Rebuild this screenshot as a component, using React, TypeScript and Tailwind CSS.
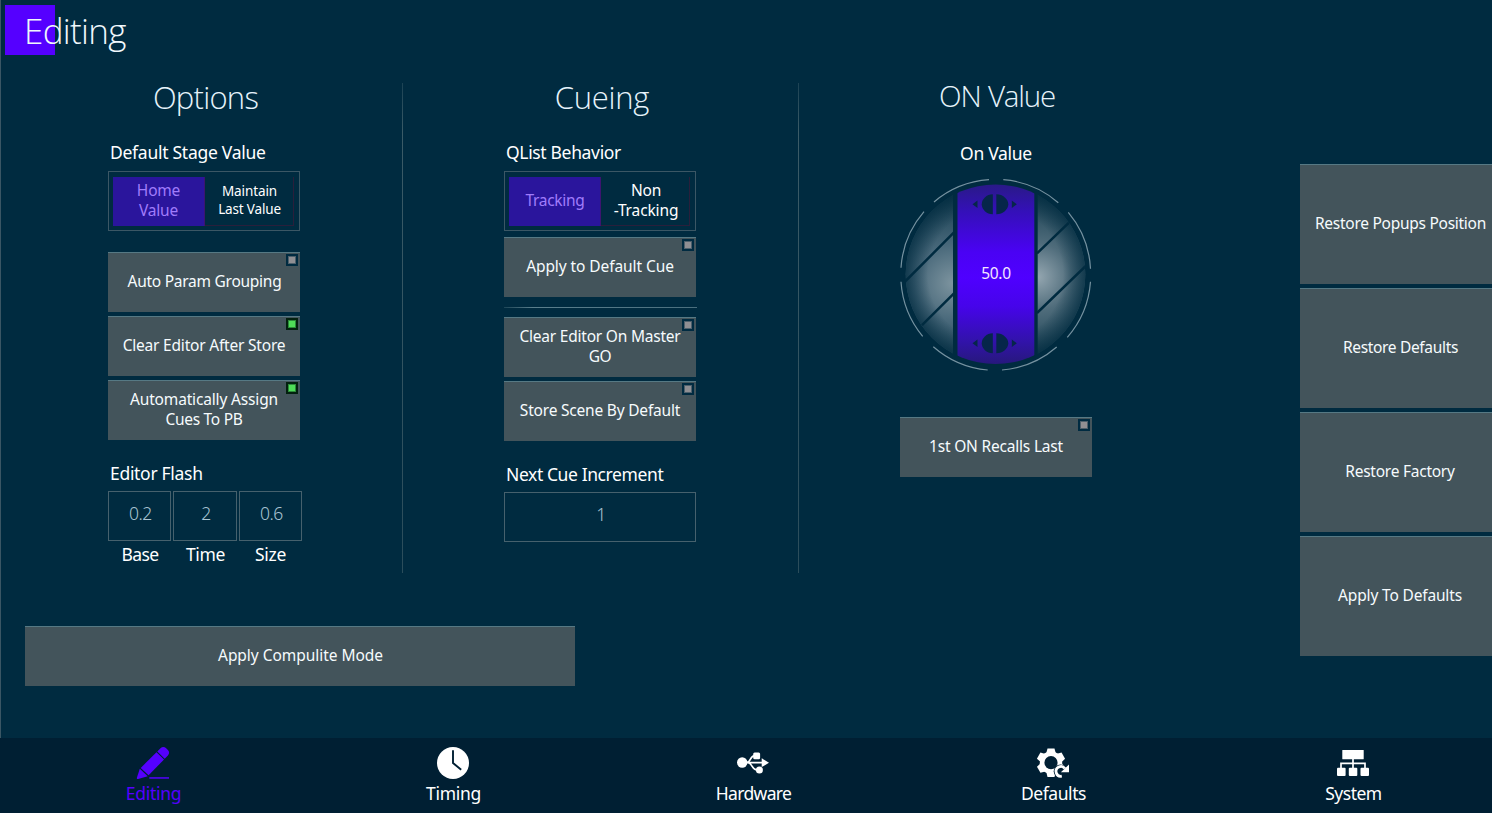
import React from "react";
import clsx from "clsx";

function Led({ on = false }: { on?: boolean }) {
  return (
    <span
      className={clsx(
        "absolute top-[1px] right-[2px] size-3 pt-[2px] pl-[2px]",
        on ? "bg-[#03210f]" : "bg-[#002b41]"
      )}
    >
      <span className={clsx("block size-2 border", on ? "border-[#2b8a38] bg-[#4fdc58]" : "border-[#4d606c] bg-[#8f8f93]")} />
    </span>
  );
}

type PanelButtonProps = {
  children: React.ReactNode;
  className?: string;
  led?: "on" | "off";
};

function PanelButton({ children, className = "h-[60px] w-full", led }: PanelButtonProps) {
  return (
    <button
      className={clsx(
        "relative flex shrink-0 flex-col items-center justify-center border-t border-[#567984] bg-[#43545b] pb-[3px] text-center text-[15.5px] leading-[20.5px] whitespace-nowrap text-[#f6fbfd]",
        className
      )}
    >
      {children}
      {led && <Led on={led === "on"} />}
    </button>
  );
}

function Heading({ children, className }: { children: React.ReactNode; className: string }) {
  return (
    <h2
      className={clsx(
        "flex h-8 items-center justify-center font-['Open_Sans','Noto_Sans',sans-serif] font-light whitespace-nowrap text-[#e6f3fb]",
        className
      )}
    >
      {children}
    </h2>
  );
}

function Label({ children, className }: { children: React.ReactNode; className: string }) {
  return <div className={clsx("h-6 text-[17.5px] leading-6 whitespace-nowrap text-white", className)}>{children}</div>;
}

function Toggle({ selected, other }: { selected: React.ReactNode; other: React.ReactNode }) {
  return (
    <div className="flex h-[60px] w-full border border-[#3b5765] pt-[5px] pr-[5px] pb-1 pl-1 text-center text-[15.5px] leading-[20.5px] whitespace-nowrap">
      <div className="flex w-[92px] flex-col items-center justify-center border-r border-[#3d1470] bg-[#2a159c] pb-[3px] text-[#a07cfb]">
        {selected}
      </div>
      <div className="flex flex-1 flex-col items-center justify-center border-r border-b border-[#2a1f3b] pb-0.5 pl-px text-white">
        {other}
      </div>
    </div>
  );
}

function NumberBox({ value, className }: { value: string; className: string }) {
  return (
    <div
      className={clsx(
        "flex h-[50px] items-center justify-center border border-[#46616d] pb-[5px] pl-[2px] text-[17.5px] font-light tracking-[-0.5px] text-[#a9c4d3]",
        className
      )}
    >
      {value}
    </div>
  );
}

function DialGrip({ y }: { y: number }) {
  return (
    <g transform={`translate(95 ${y})`} fill="#06264a">
      <path d="M-2.2 -10C-8.5 -10 -13.3 -5 -13.3 0S-8.5 10 -2.2 10Z" />
      <path d="M1.3 -10C8 -10 13.3 -5 13.3 0S8 10 1.3 10Z" />
      <path d="M-22.5 0L-17.5 -3.7V3.7Z" />
      <path d="M21.8 0L16.8 -3.7V3.7Z" />
    </g>
  );
}

function Dial() {
  return (
    <div className="grid h-48 w-48 place-items-center">
      <svg className="col-start-1 row-start-1" width="192" height="192" viewBox="0 0 192 192">
        <defs>
          <linearGradient id="band" x1="0" y1="0" x2="0" y2="1">
            <stop offset="0" stopColor="#291a86" />
            <stop offset="0.15" stopColor="#3410b8" />
            <stop offset="0.38" stopColor="#4a02f4" />
            <stop offset="0.52" stopColor="#4f00ff" />
            <stop offset="0.68" stopColor="#4604ea" />
            <stop offset="0.88" stopColor="#3113a8" />
            <stop offset="1" stopColor="#27187c" />
          </linearGradient>
          <radialGradient id="leftSide" gradientUnits="userSpaceOnUse" cx="53" cy="104" r="86">
            <stop offset="0" stopColor="#7d949f" />
            <stop offset="0.45" stopColor="#48687a" />
            <stop offset="1" stopColor="#123a4d" />
          </radialGradient>
          <radialGradient id="rightSide" gradientUnits="userSpaceOnUse" cx="138" cy="98" r="84">
            <stop offset="0" stopColor="#94a6b0" />
            <stop offset="0.4" stopColor="#4f6c7b" />
            <stop offset="1" stopColor="#123a4d" />
          </radialGradient>
          <radialGradient id="rim" gradientUnits="userSpaceOnUse" cx="95.5" cy="95.3" r="90">
            <stop offset="0.75" stopColor="#002b40" stopOpacity="0" />
            <stop offset="1" stopColor="#002b40" stopOpacity="0.7" />
          </radialGradient>
          <clipPath id="face">
            <circle cx="95.5" cy="95.3" r="89.8" />
          </clipPath>
        </defs>
        <g clipPath="url(#face)">
          <rect x="0" y="0" width="53" height="192" fill="url(#leftSide)" />
          <rect x="137.7" y="0" width="54" height="192" fill="url(#rightSide)" />
          <rect x="0" y="0" width="192" height="192" fill="url(#rim)" />
          <rect x="57.5" y="5" width="76.8" height="180" fill="url(#band)" />
          <path
            d="M54 53.4L5 102.6M54 114.4L22 146.2M137 74.3L170 42.7M137 134L187 85.8"
            stroke="#002b40"
            strokeWidth="2.5"
          />
        </g>
        <DialGrip y={25.3} />
        <DialGrip y={164.3} />
        <path
          d="M103.3 .7A95.2 95.2 0 0 1 158.3 23.7M168.3 33.3A95.2 95.2 0 0 1 190.5 89.7M190.5 102.7A95.2 95.2 0 0 1 167.3 158.3M156.7 168A95.2 95.2 0 0 1 102 191M87.7 191A95.2 95.2 0 0 1 33.3 167.7M22.7 157.3A95.2 95.2 0 0 1 1 102.7M1 88.7A95.2 95.2 0 0 1 24 32.7M34 23A95.2 95.2 0 0 1 89 .7"
          fill="none"
          stroke="#7592a0"
          strokeWidth="1.2"
        />
      </svg>
      <span className="z-10 col-start-1 row-start-1 pb-[5px] text-[15.5px] leading-5 tracking-[-0.3px] text-[#f4e6ff]">50.0</span>
    </div>
  );
}

const PencilIcon = (
  <svg width="32" height="32" viewBox="0 0 32 32" fill="currentColor" className="overflow-visible">
    <path d="M20.3 4.5L23.5 1.3C25.1 -.3 27.3 -.4 28.9 1.1L30.9 3.1C32.5 4.7 32.5 6.9 30.9 8.5L27.7 11.7Z" />
    <path d="M19.5 5.2L27 12.5L11.6 28.3L3.7 20.9Z" />
    <path d="M2.8 21.8L10.7 29.2L1.2 32C.2 32.2 -.4 31.7 -.1 30.7Z" />
    <path d="M12.3 30.2H32V31.7H12.3Z" />
  </svg>
);

const ClockIcon = (
  <svg width="32" height="32" viewBox="0 0 32 32">
    <circle cx="16" cy="16" r="16" fill="currentColor" />
    <path d="M16 3.2V16L24.2 22.7" fill="none" stroke="#001f33" strokeWidth="1.9" />
  </svg>
);

const UsbIcon = (
  <svg width="32" height="32" viewBox="0 0 32 32" fill="currentColor">
    <circle cx="5.2" cy="15.5" r="5.2" />
    <path d="M24.7 11.2L32 15.7L24.7 20.1Z" />
    <rect x="16.2" y="5.6" width="6.9" height="6.7" rx="1.5" />
    <circle cx="22.4" cy="23" r="3.5" />
    <path
      d="M9 15.7H26M10 15.3C14 15 13.3 8.9 17 8.9M11.5 16C15.5 16.5 15 23 20 23"
      fill="none"
      stroke="currentColor"
      strokeWidth="1.7"
    />
  </svg>
);

const GearIcon = (
  <svg width="32" height="32" viewBox="0 0 32 32">
    <g fill="currentColor">
      <path d="M9.3 6L10.5 1.5H17.5L18.7 6V25L17.5 29.9H10.5L9.3 25Z" />
      <path d="M9.3 6L10.5 1.5H17.5L18.7 6V25L17.5 29.9H10.5L9.3 25Z" transform="rotate(60 14 15.7)" />
      <path d="M9.3 6L10.5 1.5H17.5L18.7 6V25L17.5 29.9H10.5L9.3 25Z" transform="rotate(120 14 15.7)" />
      <circle cx="14" cy="15.7" r="11.2" />
    </g>
    <circle cx="14" cy="15.7" r="6.6" fill="#001f33" />
    <circle cx="23.6" cy="24.3" r="6.9" fill="#001f33" />
    <path d="M24.8 29.2A4.9 4.9 0 1 1 27.9 21.5" fill="none" stroke="currentColor" strokeWidth="2.8" />
    <path d="M32.2 17.3V25.3H23.9Z" fill="currentColor" />
  </svg>
);

const NetworkIcon = (
  <svg width="32" height="32" viewBox="0 0 32 32" fill="currentColor">
    <rect x="5.3" y="3" width="21.4" height="9.3" rx="0.6" />
    <rect x="0" y="20.7" width="8.6" height="8.3" rx="1" />
    <rect x="11.8" y="20.7" width="8.5" height="8.3" rx="1" />
    <rect x="23.5" y="20.7" width="8.5" height="8.3" rx="1" />
    <path d="M16 12V21M4 21V16.4H28V21" fill="none" stroke="currentColor" strokeWidth="1.7" />
  </svg>
);

const navItems = [
  { label: "Editing", icon: PencilIcon, color: "text-[#5500ff]", tracking: "tracking-[-0.25px]" },
  { label: "Timing", icon: ClockIcon, color: "text-white", tracking: "tracking-[-0.3px]" },
  { label: "Hardware", icon: UsbIcon, color: "text-white", tracking: "tracking-[-0.65px]" },
  { label: "Defaults", icon: GearIcon, color: "text-white", tracking: "tracking-[-0.45px]" },
  { label: "System", icon: NetworkIcon, color: "text-white", tracking: "tracking-[-0.5px]" },
];

function Divider() {
  return <div className="-mr-px h-[490px] w-px shrink-0 bg-linear-to-b from-[#1c4354] via-[#3b5b67] via-10% to-[#2b4d5b]" />;
}

export default function App() {
  return (
    <div className="flex h-[813px] w-[1492px] flex-col overflow-hidden bg-[#002b40] font-['Noto_Sans','Open_Sans',sans-serif] text-white">
      <main className="flex h-[738px] overflow-hidden border-l border-[#3a5664]">
        <div className="flex w-[1299px] shrink-0 flex-col">
          <header className="mt-[5px] ml-1 flex h-[50px] w-[50px] items-start bg-[#5500ff] pl-[19px]">
            <h1 className="pt-px font-['Open_Sans','Noto_Sans',sans-serif] text-[35px] leading-[50px] font-light tracking-[-0.7px] whitespace-nowrap text-[#f0f8fd]">
              Editing
            </h1>
          </header>

          <div className="mt-7 ml-[5px] flex h-[490px]">
            <section className="w-[396px] px-[102px]">
              <Heading className="-mt-[2px] pl-[3px] text-[31px] tracking-[-0.75px]">Options</Heading>
              <Label className="mt-[27px] pl-[2px] tracking-[-0.27px]">Default Stage Value</Label>
              <div className="mt-[7px]">
                <Toggle
                  selected={
                    <>
                      <span className="tracking-[-0.2px]">Home</span>
                      <span className="tracking-[-0.2px]">Value</span>
                    </>
                  }
                  other={
                    <>
                      <span className="text-[13.5px] leading-[18px] tracking-[-0.1px]">Maintain</span>
                      <span className="text-[13.5px] leading-[18px] tracking-[-0.16px]">Last Value</span>
                    </>
                  }
                />
              </div>
              <div className="mt-[21px] flex flex-col gap-1">
                <PanelButton led="off">
                  <span className="pl-px tracking-[-0.26px]">Auto Param Grouping</span>
                </PanelButton>
                <PanelButton led="on">
                  <span className="tracking-[-0.2px]">Clear Editor After Store</span>
                </PanelButton>
                <PanelButton led="on">
                  <span className="tracking-[-0.16px]">Automatically Assign</span>
                  <span className="tracking-[-0.3px]">Cues To PB</span>
                </PanelButton>
              </div>
              <Label className="mt-[21px] pl-[2px] tracking-[-0.3px]">Editor Flash</Label>
              <div className="mt-[6px] flex w-[194px] gap-0.5">
                <NumberBox value="0.2" className="w-[63px]" />
                <NumberBox value="2" className="w-16" />
                <NumberBox value="0.6" className="w-[63px]" />
              </div>
              <div className="mt-px flex w-[194px] gap-0.5 text-center">
                <Label className="w-[63px] pl-px tracking-[-0.65px]">Base</Label>
                <Label className="w-16 pl-px tracking-[-0.35px]">Time</Label>
                <Label className="w-[63px] tracking-[-0.3px]">Size</Label>
              </div>
            </section>

            <Divider />
            <section className="w-[396px] px-[102px]">
              <Heading className="-mt-[2px] pl-1 text-[31px] tracking-[-0.28px]">Cueing</Heading>
              <Label className="mt-[27px] pl-[2px] tracking-[-0.34px]">QList Behavior</Label>
              <div className="mt-[7px]">
                <Toggle
                  selected={<span className="pl-px tracking-[-0.3px]">Tracking</span>}
                  other={
                    <>
                      <span className="pl-px tracking-[-0.3px]">Non</span>
                      <span className="pl-px tracking-[-0.12px]">-Tracking</span>
                    </>
                  }
                />
              </div>
              <PanelButton led="off" className="mt-[6px] h-[60px] w-full">
                <span className="tracking-[-0.08px]">Apply to Default Cue</span>
              </PanelButton>
              <div className="mt-[10px] h-px w-[193px] bg-linear-to-r from-[#1d4657] via-[#5a7f8d] via-15% to-[#4a6f7e]" />
              <div className="mt-[9px] flex flex-col gap-1">
                <PanelButton led="off">
                  <span className="tracking-[-0.22px]">Clear Editor On Master</span>
                  <span className="tracking-[-0.4px]">GO</span>
                </PanelButton>
                <PanelButton led="off">
                  <span className="tracking-[-0.2px]">Store Scene By Default</span>
                </PanelButton>
              </div>
              <Label className="mt-[21px] pl-[2px] tracking-[-0.4px]">Next Cue Increment</Label>
              <NumberBox value="1" className="mt-[6px] w-full" />
            </section>

            <Divider />
            <section className="w-[396px] px-[102px]">
              <Heading className="-mt-[3px] pl-[2px] text-[29.5px] tracking-[-1.2px] [word-spacing:1px]">ON Value</Heading>
              <Label className="mt-[29px] text-center tracking-[-0.3px]">On Value</Label>
              <div className="mt-[14px]">
                <Dial />
              </div>
              <PanelButton led="off" className="mt-[46px] h-[60px] w-full">
                <span className="tracking-[-0.2px]">1st ON Recalls Last</span>
              </PanelButton>
            </section>
          </div>

          <PanelButton className="mt-[53px] ml-6 h-[60px] w-[550px]">
            <span className="pl-px tracking-[-0.04px]">Apply Compulite Mode</span>
          </PanelButton>
        </div>

        <aside className="flex w-[200px] shrink-0 flex-col gap-1 pt-[164px]">
          <PanelButton className="h-[120px] w-full">
            <span className="pl-px tracking-[-0.27px]">Restore Popups Position</span>
          </PanelButton>
          <PanelButton className="h-[120px] w-full">
            <span className="pl-px tracking-[-0.33px]">Restore Defaults</span>
          </PanelButton>
          <PanelButton className="h-[120px] w-full">
            <span className="tracking-[-0.25px]">Restore Factory</span>
          </PanelButton>
          <PanelButton className="h-[120px] w-full">
            <span className="tracking-[-0.16px]">Apply To Defaults</span>
          </PanelButton>
        </aside>
      </main>

      <nav className="flex h-[75px] bg-[#001f33] pl-[3px]">
        {navItems.map((item) => (
          <a key={item.label} className={clsx("flex w-[300px] shrink-0 flex-col items-center pt-[9px]", item.color)}>
            {item.icon}
            <span className={clsx("mt-[2px] pl-px text-[17.5px] leading-6", item.tracking)}>{item.label}</span>
          </a>
        ))}
      </nav>
    </div>
  );
}
